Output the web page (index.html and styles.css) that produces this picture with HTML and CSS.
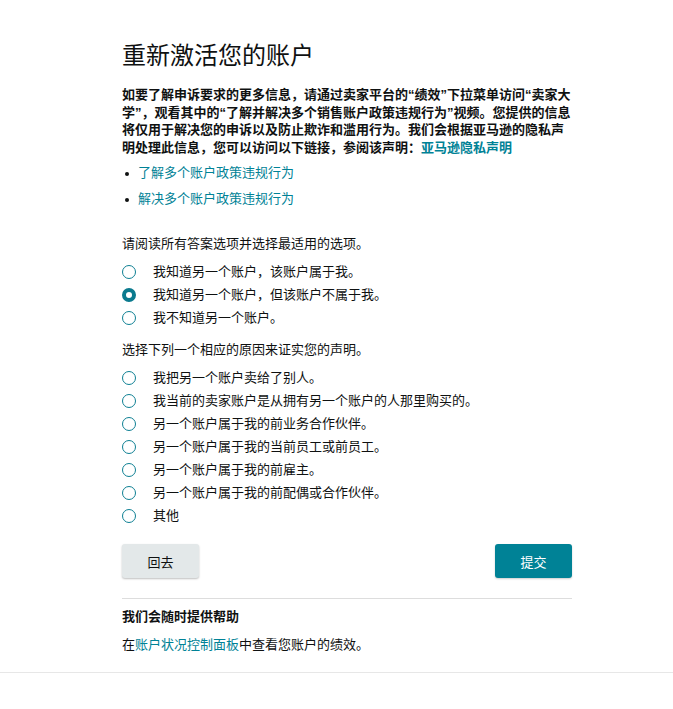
FILE: index.html
```html
<!DOCTYPE html>
<html lang="zh-CN">
<head>
    <meta charset="UTF-8">
    <meta name="viewport" content="width=device-width, initial-scale=1.0">
    <title>重新激活您的账户</title>
    <link rel="stylesheet" href="styles.css">
</head>
<body>
    <!--main form column-->
    <main class="page">
        <h1 class="page-title">重新激活您的账户</h1>

        <p class="intro">如要了解申诉要求的更多信息，请通过卖家平台的“绩效”下拉菜单访问“卖家大学”，观看其中的“了解并解决多个销售账户政策违规行为”视频。您提供的信息将仅用于解决您的申诉以及防止欺诈和滥用行为。我们会根据亚马逊的隐私声明处理此信息，您可以访问以下链接，参阅该声明：<a href="#">亚马逊隐私声明</a></p>

        <ul class="links">
            <li><a href="#">了解多个账户政策违规行为</a></li>
            <li><a href="#">解决多个账户政策违规行为</a></li>
        </ul>

        <!--first question-->
        <div class="question first">
            <p class="prompt">请阅读所有答案选项并选择最适用的选项。</p>
            <label class="option"><input type="radio" name="know"><span>我知道另一个账户，该账户属于我。</span></label>
            <label class="option"><input type="radio" name="know" checked><span>我知道另一个账户，但该账户不属于我。</span></label>
            <label class="option"><input type="radio" name="know"><span>我不知道另一个账户。</span></label>
        </div>

        <!--second question-->
        <div class="question">
            <p class="prompt">选择下列一个相应的原因来证实您的声明。</p>
            <label class="option"><input type="radio" name="reason"><span>我把另一个账户卖给了别人。</span></label>
            <label class="option"><input type="radio" name="reason"><span>我当前的卖家账户是从拥有另一个账户的人那里购买的。</span></label>
            <label class="option"><input type="radio" name="reason"><span>另一个账户属于我的前业务合作伙伴。</span></label>
            <label class="option"><input type="radio" name="reason"><span>另一个账户属于我的当前员工或前员工。</span></label>
            <label class="option"><input type="radio" name="reason"><span>另一个账户属于我的前雇主。</span></label>
            <label class="option"><input type="radio" name="reason"><span>另一个账户属于我的前配偶或合作伙伴。</span></label>
            <label class="option"><input type="radio" name="reason"><span>其他</span></label>
        </div>

        <div class="actions">
            <button class="btn btn-back">回去</button>
            <button class="btn btn-submit">提交</button>
        </div>

        <!--help section-->
        <section class="help">
            <h2>我们会随时提供帮助</h2>
            <p>在<a href="#">账户状况控制面板</a>中查看您账户的绩效。</p>
        </section>
    </main>

    <footer class="page-footer"></footer>
</body>
</html>
```

FILE: styles.css
```css
/*base page*/
body {
    margin: 0;
    font-family: "Liberation Sans", "Noto Sans CJK SC", sans-serif;
    font-size: 13px;
    line-height: 17.5px;
    color: #0f1111;
    background-color: #ffffff;
}

a {
    color: #008296;
    text-decoration: none;
}

.page {
    width: 450px;
    margin-left: 122px;
    padding-top: 41px;
    padding-bottom: 18px;
}

.page-title {
    font-size: 24px;
    font-weight: 400;
    line-height: 30px;
    margin: 0 0 15px;
}

.intro {
    font-weight: 700;
    margin: 0;
    line-height: 17.5px;
}

.links {
    list-style: none;
    margin: 4px 0 0;
    padding: 0;
}

.links li {
    position: relative;
    line-height: 26px;
    padding-left: 16px;
}

.links li::before {
    content: "";
    position: absolute;
    left: 3px;
    top: 12px;
    width: 4px;
    height: 4px;
    border-radius: 50%;
    background-color: #0f1111;
}

/*radio questions*/
.question {
    margin-top: 12px;
}

.question.first {
    margin-top: 23px;
}

.prompt {
    margin: 0 0 7px;
    line-height: 18px;
}

.option {
    display: flex;
    align-items: center;
    height: 23px;
    cursor: pointer;
}

.option input {
    appearance: none;
    -webkit-appearance: none;
    box-sizing: border-box;
    width: 14px;
    height: 14px;
    margin: 0 17px 0 0;
    border: 1.5px solid #0e7f93;
    border-radius: 50%;
    background-color: #fff;
    flex-shrink: 0;
}

.option input:checked {
    border-width: 4px;
    border-color: #0b7a8e;
}

/*buttons*/
.actions {
    display: flex;
    justify-content: space-between;
    margin-top: 17px;
    padding-bottom: 20px;
    border-bottom: 1px solid #dddddd;
}

.btn {
    width: 77px;
    height: 34px;
    border: none;
    border-radius: 3px;
    font-family: inherit;
    font-size: 13px;
    cursor: pointer;
}

.btn-back {
    background-color: #e3e8e9;
    color: #0f1111;
    box-shadow: 0 1px 2px rgba(0, 0, 0, 0.25);
}

.btn-submit {
    background-color: #008296;
    color: #ffffff;
    box-shadow: 0 1px 2px rgba(0, 0, 0, 0.2);
}

.help h2 {
    font-size: 13px;
    font-weight: 700;
    line-height: 18px;
    margin: 9px 0 10px;
}

.help p {
    margin: 0;
    line-height: 18px;
}

.page-footer {
    border-top: 1px solid #e7e7e7;
    height: 38px;
}
```
